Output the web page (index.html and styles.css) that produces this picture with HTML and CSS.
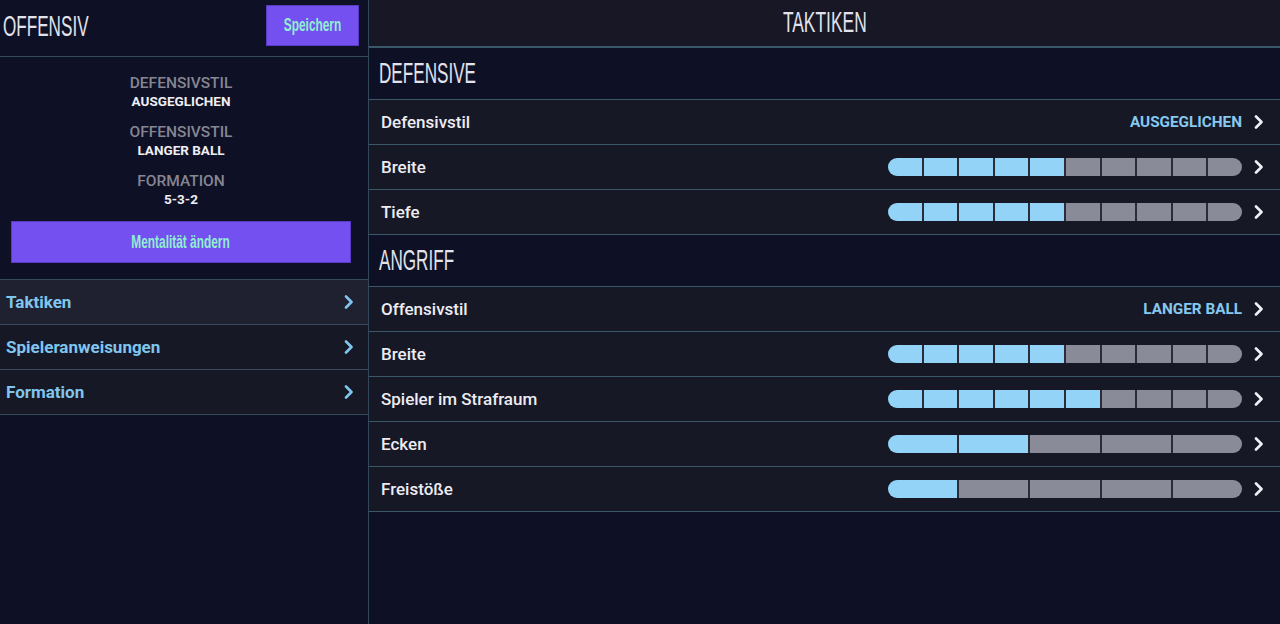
FILE: index.html
```html
<!DOCTYPE html>
<html lang="de">
<head>
  <meta charset="UTF-8">
  <title>Taktiken</title>
  <link rel="stylesheet" href="styles.css">
</head>
<body>
  <aside class="sidebar">
    <div class="side-head">
      <h1 class="cond-title"><span>OFFENSIV</span></h1>
      <button class="btn btn-save"><span>Speichern</span></button>
    </div>

    <div class="summary">
      <div class="sum-group">
        <div class="sum-label">DEFENSIVSTIL</div>
        <div class="sum-value">AUSGEGLICHEN</div>
      </div>
      <div class="sum-group">
        <div class="sum-label">OFFENSIVSTIL</div>
        <div class="sum-value">LANGER BALL</div>
      </div>
      <div class="sum-group">
        <div class="sum-label">FORMATION</div>
        <div class="sum-value">5-3-2</div>
      </div>
      <button class="btn btn-wide"><span>Mentalität ändern</span></button>
    </div>

    <nav class="side-nav">
      <a class="nav-item active">Taktiken
        <svg class="chev" viewBox="0 0 10 14"><path d="M2 1.5l5.5 5.5-5.5 5.5"/></svg>
      </a>
      <a class="nav-item">Spieleranweisungen
        <svg class="chev" viewBox="0 0 10 14"><path d="M2 1.5l5.5 5.5-5.5 5.5"/></svg>
      </a>
      <a class="nav-item">Formation
        <svg class="chev" viewBox="0 0 10 14"><path d="M2 1.5l5.5 5.5-5.5 5.5"/></svg>
      </a>
    </nav>
  </aside>

  <main class="main">
    <header class="main-head"><span class="cond-center">TAKTIKEN</span></header>

    <div class="section-head"><span class="cond-left">DEFENSIVE</span></div>
    <div class="row">
      <span class="row-label">Defensivstil</span>
      <span class="row-right"><span class="row-value">AUSGEGLICHEN</span>
        <svg class="chev" viewBox="0 0 10 14"><path d="M2 1.5l5.5 5.5-5.5 5.5"/></svg></span>
    </div>
    <div class="row">
      <span class="row-label">Breite</span>
      <span class="row-right">
        <span class="bar"><i class="on"></i><i class="on"></i><i class="on"></i><i class="on"></i><i class="on"></i><i></i><i></i><i></i><i></i><i></i></span>
        <svg class="chev" viewBox="0 0 10 14"><path d="M2 1.5l5.5 5.5-5.5 5.5"/></svg></span>
    </div>
    <div class="row">
      <span class="row-label">Tiefe</span>
      <span class="row-right">
        <span class="bar"><i class="on"></i><i class="on"></i><i class="on"></i><i class="on"></i><i class="on"></i><i></i><i></i><i></i><i></i><i></i></span>
        <svg class="chev" viewBox="0 0 10 14"><path d="M2 1.5l5.5 5.5-5.5 5.5"/></svg></span>
    </div>

    <div class="section-head"><span class="cond-left">ANGRIFF</span></div>
    <div class="row">
      <span class="row-label">Offensivstil</span>
      <span class="row-right"><span class="row-value">LANGER BALL</span>
        <svg class="chev" viewBox="0 0 10 14"><path d="M2 1.5l5.5 5.5-5.5 5.5"/></svg></span>
    </div>
    <div class="row">
      <span class="row-label">Breite</span>
      <span class="row-right">
        <span class="bar"><i class="on"></i><i class="on"></i><i class="on"></i><i class="on"></i><i class="on"></i><i></i><i></i><i></i><i></i><i></i></span>
        <svg class="chev" viewBox="0 0 10 14"><path d="M2 1.5l5.5 5.5-5.5 5.5"/></svg></span>
    </div>
    <div class="row">
      <span class="row-label">Spieler im Strafraum</span>
      <span class="row-right">
        <span class="bar"><i class="on"></i><i class="on"></i><i class="on"></i><i class="on"></i><i class="on"></i><i class="on"></i><i></i><i></i><i></i><i></i></span>
        <svg class="chev" viewBox="0 0 10 14"><path d="M2 1.5l5.5 5.5-5.5 5.5"/></svg></span>
    </div>
    <div class="row">
      <span class="row-label">Ecken</span>
      <span class="row-right">
        <span class="bar"><i class="on"></i><i class="on"></i><i></i><i></i><i></i></span>
        <svg class="chev" viewBox="0 0 10 14"><path d="M2 1.5l5.5 5.5-5.5 5.5"/></svg></span>
    </div>
    <div class="row">
      <span class="row-label">Freistöße</span>
      <span class="row-right">
        <span class="bar"><i class="on"></i><i></i><i></i><i></i><i></i></span>
        <svg class="chev" viewBox="0 0 10 14"><path d="M2 1.5l5.5 5.5-5.5 5.5"/></svg></span>
    </div>
  </main>
</body>
</html>
```

FILE: styles.css
```css
body {
  margin: 0;
  height: 624px;
  display: flex;
  background-color: #0e1025;
  font-family: Roboto, "Liberation Sans", sans-serif;
  color: #e6e6ee;
  overflow: hidden;
}

/* condensed display headings (no condensed face installed, so squeeze) */
.cond-title span,
.cond-center,
.cond-left {
  display: inline-block;
  font-family: "Liberation Sans", sans-serif;
  font-weight: normal;
  font-size: 29px;
  color: #e2e2ec;
  transform: scaleX(0.59);
}
.cond-title span,
.cond-left {
  transform-origin: left center;
}

.btn {
  font-family: "Liberation Sans", sans-serif;
  font-size: 18px;
  font-weight: bold;
  color: #90efd2;
  background-color: #7350ef;
  border: 1px solid #5a3ac4;
  padding: 0;
  cursor: pointer;
}
.btn span {
  display: inline-block;
  transform: scaleX(0.66);
}

/* sidebar */
.sidebar {
  width: 368px;
  border-right: 1px solid #33485a;
  display: flex;
  flex-direction: column;
}
.side-head {
  height: 56px;
  border-bottom: 1px solid #34495a;
  display: flex;
  align-items: center;
  justify-content: space-between;
  padding: 0 9px 0 3px;
}
.cond-title {
  margin: -4px 0 0;
  font-size: 29px;
  line-height: 1;
}
.btn-save {
  width: 93px;
  height: 41px;
  margin-top: -5px;
}
.summary {
  padding: 17px 17px 16px 11px;
  display: flex;
  flex-direction: column;
  align-items: center;
  border-bottom: 1px solid #34495a;
}
.sum-group {
  text-align: center;
  margin-bottom: 13px;
}
.sum-label {
  font-size: 15.5px;
  line-height: 18px;
  color: #868693;
  font-weight: 500;
}
.sum-value {
  font-size: 13.5px;
  line-height: 18px;
  font-weight: bold;
  color: #eeeef4;
}
.btn-wide {
  width: 100%;
  height: 42px;
}
.side-nav {
  display: flex;
  flex-direction: column;
}
.nav-item {
  height: 44px;
  border-bottom: 1px solid #34495a;
  background-color: #171826;
  display: flex;
  align-items: center;
  justify-content: space-between;
  padding: 0 14px 0 6px;
  font-size: 17px;
  font-weight: bold;
  color: #7fc5ee;
}
.nav-item.active {
  background-color: #1f2030;
}
.nav-item .chev path {
  stroke: #7fc5ee;
}

.chev {
  width: 10px;
  height: 14px;
}
.chev path {
  fill: none;
  stroke: #f0f0f6;
  stroke-width: 2.6;
  stroke-linecap: round;
  stroke-linejoin: round;
}

/* main area */
.main {
  flex: 1;
  display: flex;
  flex-direction: column;
}
.main-head {
  height: 46px;
  background-color: #171725;
  border-bottom: 2px solid #3b5868;
  text-align: center;
  line-height: 44px;
}
.cond-center {
  transform: scaleX(0.6);
}
.section-head {
  height: 51px;
  border-bottom: 1px solid #3b5868;
  padding-left: 10px;
  display: flex;
  align-items: center;
}
.row {
  height: 44px;
  border-bottom: 1px solid #3b5868;
  background-color: #171826;
  display: flex;
  align-items: center;
  justify-content: space-between;
  padding: 0 16px 0 12px;
}
.row-label {
  font-size: 17px;
  font-weight: 500;
  color: #ececf2;
}
.row-right {
  display: flex;
  align-items: center;
  gap: 12px;
}
.row-value {
  font-size: 15.3px;
  font-weight: bold;
  color: #86c9f0;
}
.bar {
  width: 354px;
  height: 18px;
  border-radius: 9px;
  overflow: hidden;
  display: flex;
  gap: 2px;
  background-color: #2b2c38;
}
.bar i {
  flex: 1;
  background-color: #898c98;
}
.bar i.on {
  background-color: #92d3f7;
}
```
